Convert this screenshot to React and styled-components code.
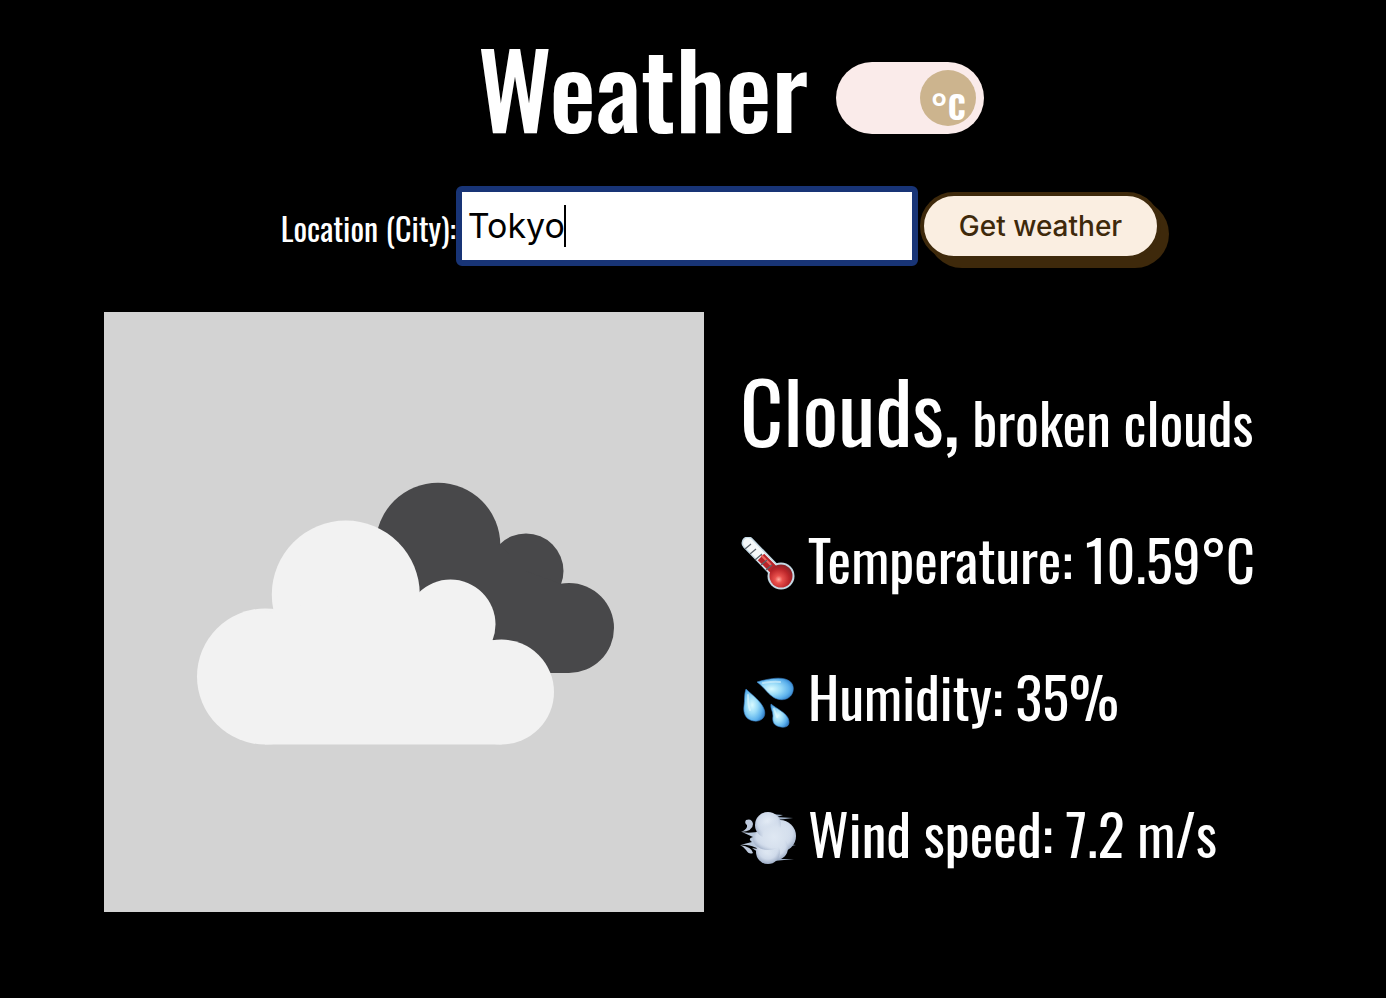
import React, { useState } from "react";
import styled, { createGlobalStyle } from "styled-components";

const GlobalStyle = createGlobalStyle`
  *, *::before, *::after { box-sizing: border-box; }
  html, body { margin: 0; background: #000; }
  body {
    color: #fff;
    font-family: Oswald, "Liberation Sans Narrow", "Arial Narrow", "Liberation Sans", sans-serif;
    font-weight: 400;
  }
`;

const Page = styled.main`
  min-height: 100vh;
  padding: 32px 0 86px;
`;

const Header = styled.header`
  display: flex;
  justify-content: center;
  align-items: center;
  gap: 28px;
  height: 120px;
  padding-left: 76px;
`;

const Title = styled.h1`
  margin: 0 0 12px;
  font-size: 104px;
  line-height: 120px;
  font-weight: 500;
`;

const Toggle = styled.label`
  display: flex;
  justify-content: flex-end;
  width: 148px;
  height: 72px;
  margin-top: 12px;
  padding: 8px;
  border-radius: 36px;
  background: #faebea;
  cursor: pointer;

  &:has(input:not(:checked)) { justify-content: flex-start; }
`;

const ToggleInput = styled.input`
  position: absolute;
  opacity: 0;
`;

const Knob = styled.span`
  width: 56px;
  padding-top: 8px;
  border-radius: 50%;
  background: #ccb48e;
  font-size: 32px;
  line-height: 56px;
  font-weight: 700;
  text-align: center;
`;

const SearchForm = styled.form`
  display: flex;
  justify-content: center;
  align-items: center;
  margin-top: 34px;
  padding-left: 56px;
`;

const FieldLabel = styled.label`
  padding-top: 4px;
  font-size: 32px;
  line-height: 40px;
`;

const Field = styled.div`
  position: relative;
  width: 462px;
  border: 6px solid #183476;
  border-radius: 6px;
  background: #fff;
`;

const CityInput = styled.input`
  display: block;
  width: 100%;
  height: 68px;
  padding: 0 6px;
  border: 0;
  background: transparent;
  color: #000;
  font: 400 34px/68px Inter, sans-serif;
  outline: none;
  caret-color: transparent;
`;

const Caret = styled.span`
  position: absolute;
  top: 13px;
  left: 102px;
  width: 2px;
  height: 42px;
  background: #000;
`;

const SubmitButton = styled.button`
  height: 68px;
  margin-left: 2px;
  padding: 0 35px;
  border: 4px solid #3e290b;
  border-radius: 34px;
  background: #faeee1;
  box-shadow: 8px 8px 0 0 #3e290b;
  color: #3e290b;
  font: 500 28px/60px Inter, sans-serif;
  cursor: pointer;
`;

const Result = styled.section`
  display: flex;
  align-items: center;
  gap: 36px;
  margin-top: 46px;
  padding-left: 104px;
`;

const CloudImage = styled.svg`
  flex: none;
  width: 600px;
  height: 600px;
  background: #d3d3d3;
`;

const Details = styled.div`
  display: flex;
  flex-direction: column;
  gap: 57px;
  padding-top: 18px;
  white-space: nowrap;
`;

const Summary = styled.h2`
  margin: 0;
  font-size: 84px;
  line-height: 80px;
  font-weight: 400;
`;

const Description = styled.span`
  font-size: 56px;
`;

const Reading = styled.p`
  display: flex;
  align-items: center;
  gap: 12px;
  margin: 0;
  font-size: 56px;
  line-height: 80px;
`;

const Emoji = styled.svg`
  flex: none;
  width: 56px;
  height: 56px;
  margin-top: 12px;
`;

function BrokenClouds() {
  return (
    <CloudImage viewBox="0 0 600 600" role="img" aria-label="Broken clouds">
      <g fill="#48484a">
        <circle cx="334" cy="233" r="62.3" />
        <circle cx="422" cy="259" r="37.5" />
        <circle cx="465" cy="316" r="45" />
        <path d="M300 233H396L422 259L457 272L465 275V361H300Z" />
      </g>
      <g fill="#f2f2f2">
        <circle cx="161" cy="364.5" r="68" />
        <circle cx="241.8" cy="282.5" r="74" />
        <circle cx="346.5" cy="312.5" r="45" />
        <circle cx="397.5" cy="380" r="52.5" />
        <path d="M161 432.5V298L168 300L242 282H315L347 300L388 328L397.5 330V432.5Z" />
      </g>
    </CloudImage>
  );
}

function Thermometer() {
  return (
    <Emoji viewBox="0 0 56 56" aria-hidden="true">
      <defs>
        <radialGradient id="bulb" cx=".4" cy=".65" r=".65">
          <stop offset="0" stopColor="#ffaca0" />
          <stop offset=".25" stopColor="#e9514d" />
          <stop offset=".7" stopColor="#ba2529" />
          <stop offset="1" stopColor="#8d2227" />
        </radialGradient>
      </defs>
      <path d="M8 6L40 39" stroke="#c5d9e4" strokeWidth="13" strokeLinecap="round" />
      <circle cx="41" cy="39" r="13.5" fill="#c5d9e4" />
      <path d="M8 6L38 37" stroke="#f5f9fa" strokeWidth="10" strokeLinecap="round" />
      <path d="M21 20L38 37" stroke="#b82328" strokeWidth="9" />
      <path d="M21 18L31 28" stroke="#e96760" strokeWidth="2" />
      <path d="M5 12L11 7M10 17L16 12M15 23L22 17M21 28L27 23M26 33L32 28" stroke="#59636b" strokeWidth="1.2" />
      <circle cx="41" cy="39" r="11.5" fill="url(#bulb)" />
    </Emoji>
  );
}

function Droplets() {
  return (
    <Emoji viewBox="0 -3 56 56" aria-hidden="true">
      <defs>
        <radialGradient id="drop" cx=".4" cy=".5" r=".65">
          <stop offset="0" stopColor="#d9faff" />
          <stop offset=".4" stopColor="#9bdcf8" />
          <stop offset=".75" stopColor="#5db2ed" />
          <stop offset="1" stopColor="#327fc8" />
        </radialGradient>
      </defs>
      <g fill="url(#drop)" stroke="#3a83c7" strokeWidth=".6">
        <path d="M17 5C27 2 38 0 45 2C53 4 55 11 52 17C48 24 39 24 33 20C27 16 23 9 17 5Z" />
        <path d="M6 12C12 18 21 24 24 32C27 40 21 45 14 44C6 43 3 37 4 29C5 23 4 17 6 12Z" />
        <path d="M31 27C37 32 45 35 48 41C51 48 47 51 41 50C34 49 32 45 33 39C33 34 30 31 31 27Z" />
      </g>
      <g fill="none" stroke="#effdff" strokeLinecap="round" strokeWidth="2" opacity=".5">
        <path d="M23 6C29 5 34 4 40 5M8 18C8 25 8 29 10 33M34 32L37 40" />
      </g>
    </Emoji>
  );
}

function WindPuff() {
  return (
    <Emoji viewBox="0 0 56 56" aria-hidden="true">
      <defs>
        <radialGradient id="puff" cx=".5" cy=".4" r=".65">
          <stop offset="0" stopColor="#e6eef7" />
          <stop offset=".6" stopColor="#cfdaea" />
          <stop offset="1" stopColor="#91a1bc" />
        </radialGradient>
        <radialGradient id="puffGlow">
          <stop offset="0" stopColor="#dfe8f3" />
          <stop offset=".6" stopColor="#d7e1ee" />
          <stop offset="1" stopColor="#cfdaea" stopOpacity="0" />
        </radialGradient>
      </defs>
      <path d="M30 3L43 4L37 6L53 7L37 9M40 33L56 34L39 37M31 48L54 48L34 50" fill="#9eafc6" />
      <path d="M2 21C11 23 17 20 24 21V40C17 38 12 33 0 34L12 31C9 29 9 27 13 26Z" fill="#b8c7db" />
      <path d="M1 21Q8 18 7 14Q4 12 6 9Q12 7 13 13Q13 20 1 21ZM0 34Q12 36 13 42Q9 44 6 39Q4 36 0 34ZM12 37Q22 38 21 43Q18 41 12 37Z" fill="#bdc9dc" />
      <g fill="url(#puff)">
        <circle cx="40" cy="25" r="16" />
        <circle cx="36" cy="37" r="12" />
        <circle cx="28" cy="41" r="12" />
        <ellipse cx="28" cy="28" rx="15" ry="11" />
        <circle cx="28" cy="14" r="13" />
      </g>
      <ellipse cx="34" cy="26" rx="18" ry="18" fill="url(#puffGlow)" />
    </Emoji>
  );
}

const readings = [
  { icon: Thermometer, text: "Temperature: 10.59°C" },
  { icon: Droplets, text: "Humidity: 35%" },
  { icon: WindPuff, text: "Wind speed: 7.2 m/s" },
];

export default function App() {
  const [city, setCity] = useState("Tokyo");
  return (
    <>
      <GlobalStyle />
      <Page>
        <Header>
          <Title>Weather</Title>
          <Toggle htmlFor="units">
            <ToggleInput id="units" type="checkbox" defaultChecked />
            <Knob>°C</Knob>
          </Toggle>
        </Header>
        <SearchForm onSubmit={(event) => event.preventDefault()}>
          <FieldLabel htmlFor="city">Location (City):</FieldLabel>
          <Field>
            <CityInput id="city" type="text" value={city} onChange={(event) => setCity(event.target.value)} />
            <Caret aria-hidden="true" />
          </Field>
          <SubmitButton type="submit">Get weather</SubmitButton>
        </SearchForm>
        <Result>
          <BrokenClouds />
          <Details>
            <Summary>
              Clouds,<Description> broken clouds</Description>
            </Summary>
            {readings.map(({ icon: Icon, text }) => (
              <Reading key={text}>
                <Icon />
                <span>{text}</span>
              </Reading>
            ))}
          </Details>
        </Result>
      </Page>
    </>
  );
}
